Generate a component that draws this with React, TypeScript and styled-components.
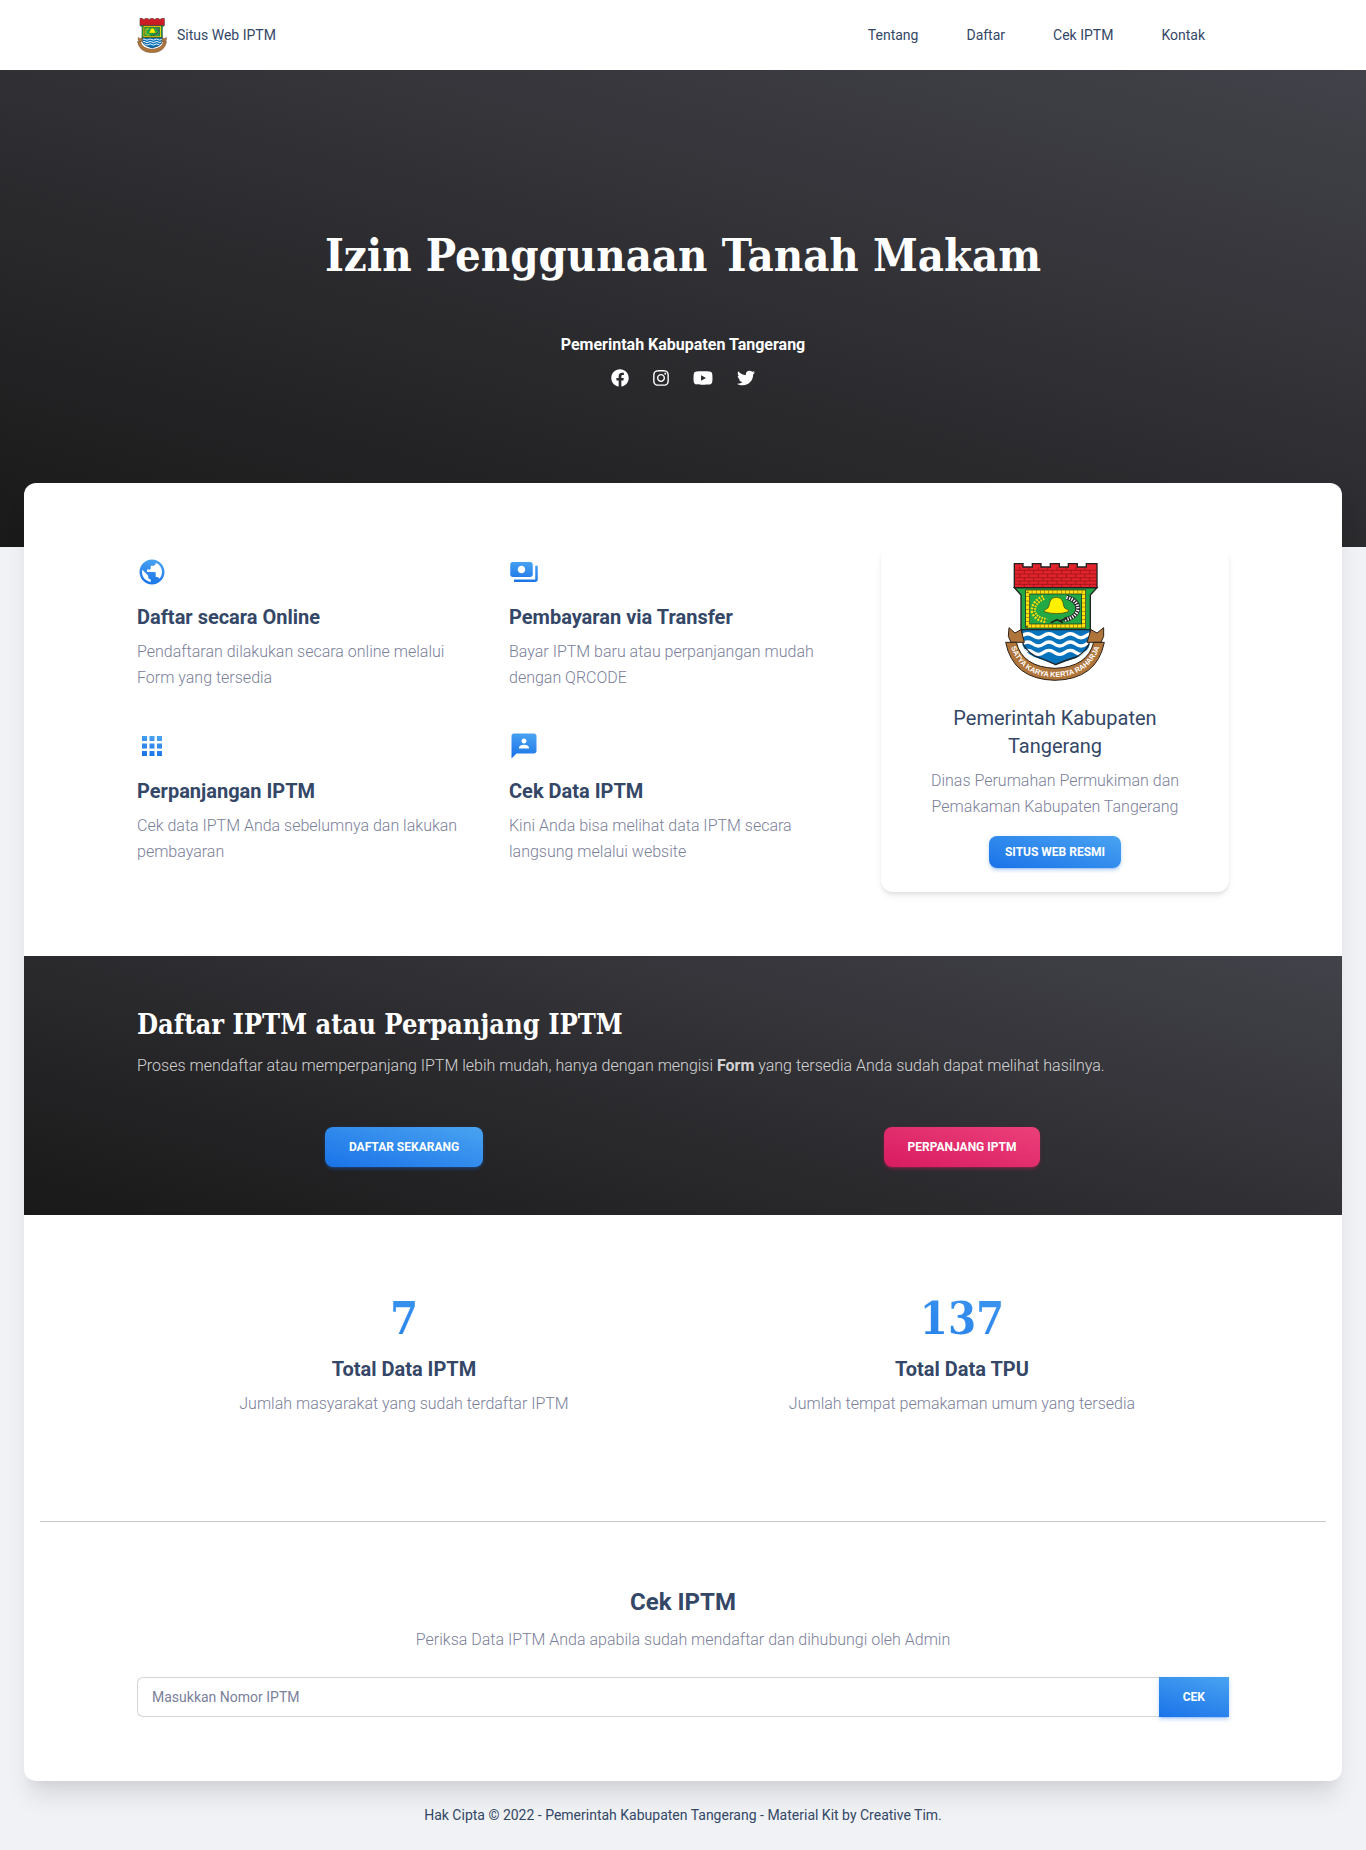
import React from "react";
import styled, { createGlobalStyle, css } from "styled-components";
import { FaFacebook, FaInstagram, FaTwitter, FaYoutube } from "react-icons/fa";
import { MdPublic, MdPayments, MdApps, Md3P } from "react-icons/md";

const ink = "#344767";
const muted = "#7b809a";
const darkGradient = "linear-gradient(195deg, #42424a, #191919)";
const slab = `"DejaVu Serif Condensed", "DejaVu Serif", serif`;

const GlobalStyle = createGlobalStyle`
  *, *::before, *::after { box-sizing: border-box; }
  body {
    margin: 0;
    background: #f0f2f5;
    color: ${ink};
    font-family: Roboto, "Liberation Sans", sans-serif;
    font-size: 16px;
    line-height: 26px;
  }
  h1, h2, h3, h4, p { margin: 0; }
  a { color: inherit; text-decoration: none; }
`;

const Container = styled.div`
  width: 100%;
  max-width: 1140px;
  margin: 0 auto;
  padding: 0 24px;
`;

const TopBar = styled.header`
  background: #fff;
`;

const NavRow = styled(Container)`
  display: flex;
  align-items: center;
  justify-content: space-between;
  min-height: 70px;
  font-size: 14px;
`;

const Brand = styled.a`
  display: flex;
  align-items: center;
  gap: 10px;
`;

const NavLinks = styled.nav`
  display: flex;
  flex-wrap: wrap;
  gap: 48px;
  padding-right: 24px;
`;

const Hero = styled.section`
  display: flex;
  flex-direction: column;
  align-items: center;
  padding: 156px 24px 157px;
  background: ${darkGradient};
  color: #fff;
  text-align: center;
`;

const HeroTitle = styled.h1`
  font: 700 45px/60px ${slab};
`;

const HeroSub = styled.p`
  margin-top: 46px;
  font-weight: 700;
`;

const Social = styled.div`
  display: flex;
  gap: 24px;
  margin-top: 8px;
`;

const SocialLink = styled.a<{ $width: number }>`
  display: flex;
  align-items: center;
  height: 24px;

  svg {
    width: ${(p) => p.$width}px;
    height: 18px;
  }
`;

const Sheet = styled.main`
  position: relative;
  margin: -64px 24px 0;
  border-radius: 12px;
  background: #fff;
  box-shadow: 0 20px 25px -5px rgba(0, 0, 0, 0.1), 0 10px 10px -5px rgba(0, 0, 0, 0.04);
`;

const Intro = styled(Container)`
  display: grid;
  gap: 24px;
  padding-top: 64px;
  padding-bottom: 64px;
  @media (min-width: 900px) {
    grid-template-columns: minmax(0, 720fr) minmax(0, 348fr);
  }
`;

const Features = styled.div`
  display: grid;
  grid-template-columns: 1fr 1fr;
  align-content: start;
  gap: 40px 24px;
  padding-top: 10px;
`;

const Feature = styled.article`
  padding-right: 24px;

  svg { display: block; fill: url(#info-gradient); }
  h2 { margin: 16px 0 8px; }
`;

const SmallTitle = styled.h2`
  font-size: 20px;
  line-height: 28px;
  font-weight: 700;
`;

const Body = styled.p`
  color: ${muted};
  font-weight: 300;
`;

const Profile = styled.aside`
  display: flex;
  flex-direction: column;
  align-items: center;
  padding: 16px 40px 24px;
  border-radius: 12px;
  text-align: center;
  box-shadow: 0 4px 6px -1px rgba(0, 0, 0, 0.1), 0 2px 4px -1px rgba(0, 0, 0, 0.06);

  h2 { margin: 23px 0 8px; font-weight: 400; }
  a { margin-top: 16px; }
`;

const buttonLook = css<{ $tone?: "info" | "pink"; $small?: boolean }>`
  display: inline-block;
  border: 0;
  border-radius: 8px;
  padding: ${(p) => (p.$small ? "8px 16px" : "12px 24px")};
  font: 700 12px/16px Roboto, "Liberation Sans", sans-serif;
  text-transform: uppercase;
  color: #fff;
  background: ${(p) =>
    p.$tone === "pink"
      ? "linear-gradient(195deg, #ec407a, #d81b60)"
      : "linear-gradient(195deg, #49a3f1, #1a73e8)"};
  box-shadow: ${(p) => {
    const c = p.$tone === "pink" ? "233, 30, 99" : "26, 115, 232";
    return `0 3px 3px 0 rgba(${c}, 0.15), 0 3px 1px -2px rgba(${c}, 0.2), 0 1px 5px 0 rgba(${c}, 0.15)`;
  }};
  cursor: pointer;
`;

const ButtonLink = styled.a<{ $tone?: "info" | "pink"; $small?: boolean }>`
  ${buttonLook}
`;

const Band = styled.section`
  padding: 48px 0;
  background: ${darkGradient};
  color: #fff;

  h2 { font: 700 27px/41px ${slab}; }
  p { margin-top: 8px; color: rgba(255, 255, 255, 0.8); font-weight: 300; }
  b { font-weight: 700; }
`;

const Halves = styled.div`
  display: grid;
  grid-template-columns: 1fr 1fr;
  gap: 24px;
  justify-items: center;
  text-align: center;
`;

const BandActions = styled(Halves)`
  padding-top: 48px;
`;

const Stats = styled(Container)`
  padding-top: 72px;
  padding-bottom: 104px;
`;

const Stat = styled.div`
  h2 { margin: 4px 0 8px; }
`;

const StatNumber = styled.div`
  font: 700 45px/64px ${slab};
  background: linear-gradient(195deg, #49a3f1, #1a73e8);
  background-clip: text;
  color: transparent;
`;

const Divider = styled.hr`
  height: 1px;
  margin: 0 16px;
  border: 0;
  background: #c7c8cc;
`;

const Check = styled(Container)`
  padding-top: 64px;
  padding-bottom: 64px;
  text-align: center;

  h2 { margin-bottom: 8px; font-size: 24px; line-height: 33px; }
`;

const CheckForm = styled.form`
  display: flex;
  margin-top: 24px;
`;

const NumberInput = styled.input`
  flex: 1;
  min-width: 0;
  height: 40px;
  padding: 0 14px;
  border: 1px solid #d2d6da;
  border-right: 0;
  border-radius: 6px 0 0 6px;
  background: #fff;
  color: ${ink};
  font: 400 14px/20px Roboto, "Liberation Sans", sans-serif;

  &::placeholder { color: ${muted}; opacity: 1; }
`;

const SubmitButton = styled.button<{ $tone?: "info" | "pink"; $small?: boolean }>`
  ${buttonLook}
  border-radius: 0;
`;

const Footer = styled.footer`
  position: relative;
  padding: 21px 24px 22px;
  text-align: center;
  font-size: 14px;
`;

/* Regency coat of arms: brick battlement, bell field, waves and motto ribbon. */
const Emblem = ({ id, width, height, motto }: { id: string; width: number; height: number; motto?: string }) => (
  <svg width={width} height={height} viewBox="0 0 300 354" role="img" aria-label="Lambang Kabupaten Tangerang">
    <defs>
      <clipPath id={`${id}-shield`}>
        <path d="M50 200H256V236Q252 268 214 285Q180 295 152 305Q124 295 88 282Q54 266 50 236Z" />
      </clipPath>
      <path id={`${id}-motto`} d="M14 240Q42 341 150 342Q258 341 288 240" />
    </defs>
    <path d="M28 74L48 96V200H256V96L276 74Z" fill="#22a845" stroke="#222" strokeWidth="4" />
    <path d="M28 2H54V12H82V2H108V12H136V2H163V12H190V2H217V12H244V2H276V74H28Z" fill="#e2232b" stroke="#222" strokeWidth="4" />
    <path
      d="M28 22H276M28 33H276M28 44H276M28 54H276M28 64H276M44 12V22M72 12V22M100 12V22M128 12V22M156 12V22M184 12V22M212 12V22M240 12V22M58 22V33M86 22V33M114 22V33M142 22V33M170 22V33M198 22V33M226 22V33M254 22V33M44 33V44M72 33V44M100 33V44M128 33V44M156 33V44M184 33V44M212 33V44M240 33V44M58 44V54M86 44V54M114 44V54M142 44V54M170 44V54M198 44V54M226 44V54M254 44V54M44 54V64M72 54V64M100 54V64M128 54V64M156 54V64M184 54V64M212 54V64M240 54V64M58 64V74M86 64V74M114 64V74M142 64V74M170 64V74M198 64V74M226 64V74M254 64V74"
      stroke="#8c1218"
      strokeWidth="2"
    />
    <rect x="68" y="87" width="168" height="102" fill="none" stroke="#222" strokeWidth="14" />
    <rect x="68" y="87" width="168" height="102" fill="none" stroke="#fde10b" strokeWidth="10" />
    <rect x="68" y="87" width="168" height="102" fill="none" stroke="#5d5406" strokeWidth="10" strokeDasharray="1.5 11" />
    <path
      d="M118 146Q116 140 128 136C133 130 132 124 135 116Q140 103 154 103Q168 103 173 116C176 124 175 130 180 136Q193 140 191 146Q172 152 154 152Q136 152 118 146Z"
      fill="#fff000"
      stroke="#3c3a10"
      strokeWidth="2"
    />
    <path d="M116 103Q84 118 85 145Q91 169 126 173" fill="none" stroke="#fde10b" strokeWidth="16" strokeDasharray="5 4" />
    <path d="M116 103Q84 118 85 145Q91 169 126 173" fill="none" stroke="#376018" strokeWidth="2" />
    <path d="M184 103Q222 112 218 142Q211 164 178 171" fill="none" stroke="#222" strokeWidth="14" />
    <path d="M184 103Q222 112 218 142Q211 164 178 171" fill="none" stroke="#f4f4f4" strokeWidth="10" strokeDasharray="4 4" />
    <path d="M137 179L156 170L174 179M165 174L186 166" fill="none" stroke="#222" strokeWidth="5" />
    <path d="M4 238Q32 330 150 338Q268 330 296 238L256 238Q246 292 152 307Q58 292 48 238Z" fill="#fff" />
    <g clipPath={`url(#${id}-shield)`}>
      <rect x="46" y="200" width="216" height="110" fill="#0873bd" />
      <path
        d="M48 216Q64 204 80 216T112 216T144 216T176 216T208 216T240 216T272 216M48 241Q64 229 80 241T112 241T144 241T176 241T208 241T240 241T272 241M48 266Q64 254 80 266T112 266T144 266T176 266T208 266T240 266T272 266"
        transform="translate(4 2)"
        fill="none"
        stroke="#fff"
        strokeWidth="10"
      />
    </g>
    <path d="M50 200H256V228Q250 262 214 282Q180 292 152 305Q124 292 90 279Q56 260 50 228Z" fill="none" stroke="#222" strokeWidth="4" />
    <path d="M12 194L30 210L48 200L58 238H18L10 220ZM296 194L276 210L258 200L246 238H288L296 220Z" fill="#b0753a" stroke="#2b2118" strokeWidth="3" />
    <path d="M2 238H34Q52 312 150 316Q248 312 266 238H298Q276 349 150 352Q24 349 2 238Z" fill="#b0753a" stroke="#2b2118" strokeWidth="3" />
    {motto && (
      <text fill="#fff" fontFamily="Liberation Sans, sans-serif" fontSize="22" fontWeight="700" textAnchor="middle">
        <textPath href={`#${id}-motto`} startOffset="50%">
          {motto}
        </textPath>
      </text>
    )}
  </svg>
);

const features = [
  { icon: MdPublic, title: "Daftar secara Online", text: "Pendaftaran dilakukan secara online melalui Form yang tersedia" },
  { icon: MdPayments, title: "Pembayaran via Transfer", text: "Bayar IPTM baru atau perpanjangan mudah dengan QRCODE" },
  { icon: MdApps, title: "Perpanjangan IPTM", text: "Cek data IPTM Anda sebelumnya dan lakukan pembayaran" },
  { icon: Md3P, title: "Cek Data IPTM", text: "Kini Anda bisa melihat data IPTM secara langsung melalui website" },
];

const stats = [
  { value: "7", title: "Total Data IPTM", text: "Jumlah masyarakat yang sudah terdaftar IPTM" },
  { value: "137", title: "Total Data TPU", text: "Jumlah tempat pemakaman umum yang tersedia" },
];

const socials = [
  { icon: FaFacebook, name: "Facebook", width: 18 },
  { icon: FaInstagram, name: "Instagram", width: 16 },
  { icon: FaYoutube, name: "YouTube", width: 20 },
  { icon: FaTwitter, name: "Twitter", width: 18 },
];

export default function App() {
  return (
    <>
      <GlobalStyle />
      <svg width="0" height="0" style={{ position: "absolute" }} aria-hidden="true">
        <linearGradient id="info-gradient" x1="0.6" y1="0" x2="0.4" y2="1">
          <stop offset="0" stopColor="#49a3f1" />
          <stop offset="1" stopColor="#1a73e8" />
        </linearGradient>
      </svg>
      <TopBar>
        <NavRow>
          <Brand href="#">
            <Emblem id="brand" width={30} height={35} />
            Situs Web IPTM
          </Brand>
          <NavLinks>
            <a href="#tentang">Tentang</a>
            <a href="#daftar">Daftar</a>
            <a href="#cek">Cek IPTM</a>
            <a href="#kontak">Kontak</a>
          </NavLinks>
        </NavRow>
      </TopBar>
      <Hero>
        <HeroTitle>Izin Penggunaan Tanah Makam</HeroTitle>
        <HeroSub>Pemerintah Kabupaten Tangerang</HeroSub>
        <Social>
          {socials.map(({ icon: Icon, name, width }) => (
            <SocialLink key={name} href="#kontak" aria-label={name} $width={width}>
              <Icon />
            </SocialLink>
          ))}
        </Social>
      </Hero>
      <Sheet>
        <Intro id="tentang">
          <Features>
            {features.map(({ icon: Icon, title, text }) => (
              <Feature key={title}>
                <Icon size={30} />
                <SmallTitle>{title}</SmallTitle>
                <Body>{text}</Body>
              </Feature>
            ))}
          </Features>
          <Profile>
            <Emblem id="profile" width={100} height={118} motto="SATYA KARYA KERTA RAHARJA" />
            <SmallTitle>Pemerintah Kabupaten Tangerang</SmallTitle>
            <Body>Dinas Perumahan Permukiman dan Pemakaman Kabupaten Tangerang</Body>
            <ButtonLink href="#kontak" $small>
              Situs Web Resmi
            </ButtonLink>
          </Profile>
        </Intro>
        <Band id="daftar">
          <Container>
            <h2>Daftar IPTM atau Perpanjang IPTM</h2>
            <p>
              Proses mendaftar atau memperpanjang IPTM lebih mudah, hanya dengan mengisi <b>Form</b> yang tersedia Anda
              sudah dapat melihat hasilnya.
            </p>
            <BandActions>
              <ButtonLink href="#daftar">Daftar Sekarang</ButtonLink>
              <ButtonLink href="#daftar" $tone="pink">
                Perpanjang IPTM
              </ButtonLink>
            </BandActions>
          </Container>
        </Band>
        <Stats>
          <Halves>
            {stats.map((s) => (
              <Stat key={s.title}>
                <StatNumber>{s.value}</StatNumber>
                <SmallTitle>{s.title}</SmallTitle>
                <Body>{s.text}</Body>
              </Stat>
            ))}
          </Halves>
        </Stats>
        <Divider />
        <Check id="cek">
          <SmallTitle>Cek IPTM</SmallTitle>
          <Body>Periksa Data IPTM Anda apabila sudah mendaftar dan dihubungi oleh Admin</Body>
          <CheckForm onSubmit={(e) => e.preventDefault()}>
            <NumberInput id="nomor" aria-label="Nomor IPTM" placeholder="Masukkan Nomor IPTM" />
            <SubmitButton type="submit">Cek</SubmitButton>
          </CheckForm>
        </Check>
      </Sheet>
      <Footer id="kontak">Hak Cipta © 2022 - Pemerintah Kabupaten Tangerang - Material Kit by Creative Tim.</Footer>
    </>
  );
}
